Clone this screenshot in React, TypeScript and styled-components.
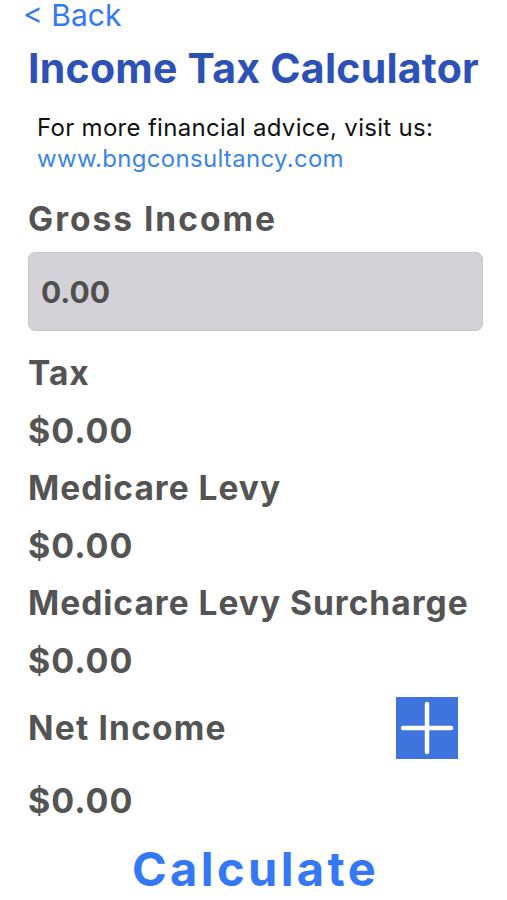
import React from "react";
import styled, { createGlobalStyle } from "styled-components";

const GlobalStyle = createGlobalStyle`
  html, body {
    margin: 0;
    padding: 0;
    background: #ffffff;
  }
  body {
    font-family: Inter, "Liberation Sans", sans-serif;
  }
`;

const Screen = styled.div`
  width: 507px;
  height: 900px;
  overflow: hidden;
  display: flex;
  flex-direction: column;
  background: #ffffff;
`;

const BackLink = styled.div`
  margin-left: 23px;
  font-size: 30px;
  line-height: 30px;
  color: #3478f6;
`;

const Title = styled.h1`
  margin: 14px 0 0 28px;
  font-size: 41px;
  line-height: 48px;
  font-weight: 700;
  letter-spacing: 0.25px;
  color: #2d51b6;
  white-space: nowrap;
`;

const Advice = styled.div`
  margin: 20px 0 0 37px;
  font-size: 24px;
  line-height: 31px;
  letter-spacing: 0.3px;
  color: #111111;
`;

const Website = styled.div`
  color: #3c84eb;
`;

const Form = styled.div`
  display: flex;
  flex-direction: column;
  padding: 0 24px 0 28px;
`;

const FieldLabel = styled.div`
  margin-top: 25px;
  font-size: 33.5px;
  line-height: 40px;
  font-weight: 700;
  letter-spacing: 2px;
  color: #545454;
`;

const AmountInput = styled.div`
  margin-top: 13px;
  height: 77px;
  display: flex;
  align-items: center;
  padding-left: 12px;
  background: #d2d2d7;
  border: 1px solid #c6c6cb;
  border-radius: 7px;
  font-size: 30px;
  font-weight: 700;
  color: #4f4f4f;
`;

const Results = styled.div`
  display: flex;
  flex-direction: column;
  margin-top: 14px;
`;

const Line = styled.div<{ $gap?: number; $value?: boolean }>`
  margin-top: ${(p) => p.$gap ?? 0}px;
  font-size: ${(p) => (p.$value ? 34 : 33.5)}px;
  line-height: 57.4px;
  font-weight: 700;
  letter-spacing: 1px;
  color: #545454;
  white-space: nowrap;
`;

const NetRow = styled.div`
  margin-top: 8px;
  display: flex;
  align-items: center;
  justify-content: space-between;
  padding-right: 25px;
  height: 62px;
  font-size: 33.5px;
  font-weight: 700;
  letter-spacing: 1.2px;
  color: #545454;
`;

const AddButton = styled.div`
  width: 62px;
  height: 62px;
  background: #3f74dc;
  display: flex;
  align-items: center;
  justify-content: center;
`;

const CalculateButton = styled.div`
  margin-top: 8px;
  text-align: center;
  font-size: 47px;
  line-height: 62px;
  font-weight: 700;
  letter-spacing: 3.4px;
  color: #3478f6;
`;

const rows = [
  { label: "Tax", value: "$0.00" },
  { label: "Medicare Levy", value: "$0.00" },
  { label: "Medicare Levy Surcharge", value: "$0.00" },
];

export default function App() {
  return (
    <Screen>
      <GlobalStyle />
      <BackLink>&lt; Back</BackLink>
      <Title>Income Tax Calculator</Title>
      <Advice>
        For more financial advice, visit us:
        <Website>www.bngconsultancy.com</Website>
      </Advice>
      <Form>
        <FieldLabel>Gross Income</FieldLabel>
        <AmountInput>0.00</AmountInput>
        <Results>
          {rows.map((r) => (
            <React.Fragment key={r.label}>
              <Line>{r.label}</Line>
              <Line $value>{r.value}</Line>
            </React.Fragment>
          ))}
          <NetRow>
            <span>Net Income</span>
            <AddButton>
              <svg width="56" height="56" viewBox="0 0 56 56">
                <path
                  d="M28 4v48M4 28h48"
                  stroke="#ffffff"
                  strokeWidth="4.5"
                  strokeLinecap="round"
                />
              </svg>
            </AddButton>
          </NetRow>
          <Line $gap={13} $value>
            $0.00
          </Line>
        </Results>
        <CalculateButton>Calculate</CalculateButton>
      </Form>
    </Screen>
  );
}
